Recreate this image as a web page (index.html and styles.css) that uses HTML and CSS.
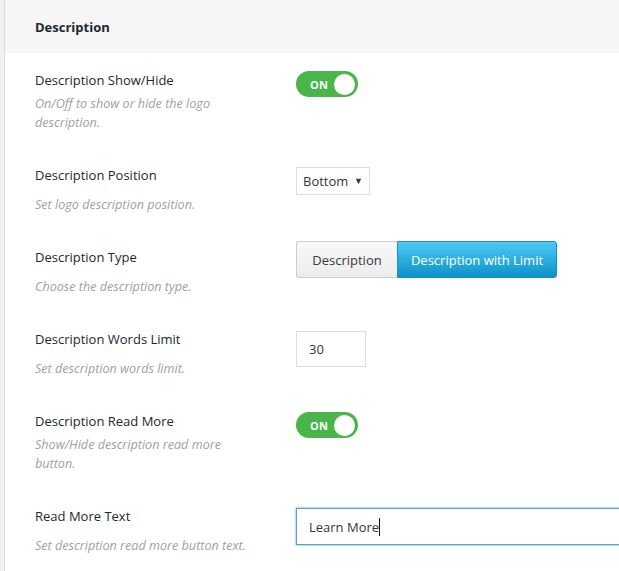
FILE: index.html
```html
<!DOCTYPE html>
<html>
<head>
<meta charset="utf-8">
<link rel="stylesheet" href="styles.css">
</head>
<body>
<div class="panel">
  <div class="section-head">Description</div>

  <div class="row row-toggle">
    <div class="label-col">
      <div class="label">Description Show/Hide</div>
      <div class="desc">On/Off to show or hide the logo description.</div>
    </div>
    <div class="control-col ctl-toggle">
      <div class="toggle"><span class="toggle-text">ON</span><span class="knob"></span></div>
    </div>
  </div>

  <div class="row">
    <div class="label-col">
      <div class="label">Description Position</div>
      <div class="desc">Set logo description position.</div>
    </div>
    <div class="control-col ctl-field">
      <div class="select"><span>Bottom</span><span class="arrow">▼</span></div>
    </div>
  </div>

  <div class="row">
    <div class="label-col">
      <div class="label">Description Type</div>
      <div class="desc">Choose the description type.</div>
    </div>
    <div class="control-col ctl-group">
      <div class="btn-group">
        <span class="btn">Description</span>
        <span class="btn btn-active">Description with Limit</span>
      </div>
    </div>
  </div>

  <div class="row">
    <div class="label-col">
      <div class="label">Description Words Limit</div>
      <div class="desc">Set description words limit.</div>
    </div>
    <div class="control-col ctl-field">
      <div class="input input-small">30</div>
    </div>
  </div>

  <div class="row row-toggle">
    <div class="label-col">
      <div class="label">Description Read More</div>
      <div class="desc">Show/Hide description read more button.</div>
    </div>
    <div class="control-col ctl-toggle">
      <div class="toggle"><span class="toggle-text">ON</span><span class="knob"></span></div>
    </div>
  </div>

  <div class="row">
    <div class="label-col">
      <div class="label">Read More Text</div>
      <div class="desc">Set description read more button text.</div>
    </div>
    <div class="control-col ctl-field">
      <div class="input input-wide input-focus">Learn More<span class="caret"></span></div>
    </div>
  </div>
</div>
</body>
</html>
```
FILE: styles.css
```css
html, body {
  margin: 0;
  padding: 0;
}
body {
  background: #f1f1f1;
  font-family: "Open Sans", "Noto Sans", sans-serif;
  font-size: 12px;
  color: #23282d;
  height: 571px;
  overflow: hidden;
}
.panel {
  margin-left: 4px;
  border-left: 1px solid #dcdcdc;
  background: #fff;
  min-height: 571px;
}
.section-head {
  height: 53px;
  box-sizing: border-box;
  background: #f6f6f6;
  padding-left: 30px;
  display: flex;
  align-items: center;
  font-weight: 700;
  font-size: 13px;
}
.row {
  display: flex;
  padding: 17px 0 16.5px 30px;
}
.label-col {
  width: 261px;
  flex: none;
}
.label {
  line-height: 20px;
  font-size: 13px;
  color: #23282d;
}
.desc {
  font-style: italic;
  font-size: 12.6px;
  color: #9ca1a6;
  line-height: 19px;
  margin-top: 9.5px;
  width: 228px;
}
.row-toggle .desc {
  margin-top: 3.5px;
}
.control-col {
  flex: 1;
  min-width: 0;
}
.ctl-toggle { padding-top: 1px; }
.ctl-field { padding-top: 2px; }
.ctl-group { margin-top: -6px; }

.toggle {
  width: 62px;
  height: 26px;
  border-radius: 13px;
  background: #4ab54a;
  display: flex;
  align-items: center;
  justify-content: space-between;
  padding: 0 3px 0 14px;
  box-sizing: border-box;
}
.toggle-text {
  color: #fff;
  font-weight: 700;
  font-size: 11px;
  letter-spacing: 0.2px;
}
.knob {
  width: 21px;
  height: 21px;
  border-radius: 50%;
  background: #fff;
}

.select {
  width: 74px;
  height: 28px;
  box-sizing: border-box;
  border: 1px solid #dddddd;
  display: flex;
  align-items: center;
  justify-content: space-between;
  padding: 0 6px 0 6px;
  font-size: 13px;
  color: #32373c;
}
.arrow {
  font-size: 9px;
  color: #32373c;
  margin-top: -2px;
}

.btn-group {
  display: inline-flex;
  height: 37px;
}
.btn {
  display: flex;
  align-items: center;
  justify-content: center;
  box-sizing: border-box;
  font-size: 13px;
  white-space: nowrap;
}
.btn:first-child {
  width: 101px;
  border: 1px solid #cccccc;
  border-right: none;
  border-radius: 3px 0 0 3px;
  background: linear-gradient(#f9f9f9, #ececec);
  color: #333a40;
}
.btn-active {
  width: 160px;
  border: 1px solid #1b8fc0;
  border-radius: 0 3px 3px 0;
  background: linear-gradient(#4fcaf5, #0b92c8);
  color: #fff;
}

.input {
  height: 36px;
  box-sizing: border-box;
  border: 1px solid #dddddd;
  display: flex;
  align-items: center;
  padding-left: 12px;
  font-size: 13px;
  color: #32373c;
}
.input-small {
  width: 70px;
}
.input-wide {
  width: 340px;
  height: 37px;
}
.input-focus {
  border-color: #5b9dd9;
  box-shadow: 0 0 2px rgba(30, 140, 190, 0.8);
}
.caret {
  display: inline-block;
  width: 1px;
  height: 18px;
  background: #111;
  margin-left: 0;
}
```
